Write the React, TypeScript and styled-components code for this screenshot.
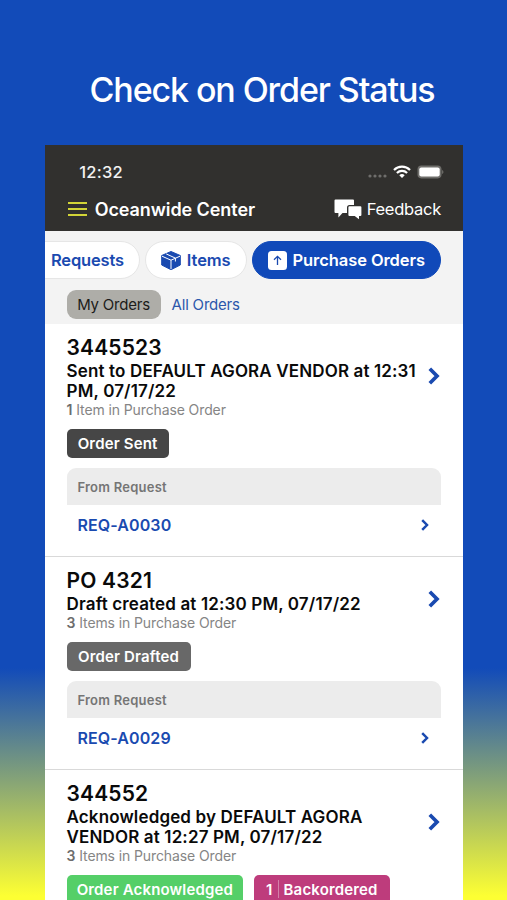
import React from "react";
import styled, { createGlobalStyle } from "styled-components";

const Global = createGlobalStyle`
  * { box-sizing: border-box; }
  html, body { margin: 0; padding: 0; }
  body { font-family: Inter, "Liberation Sans", sans-serif; overflow: hidden; }
`;

const Page = styled.div`
  width: 507px;
  height: 900px;
  overflow: hidden;
  background: linear-gradient(180deg, #124bb9 0, #124bb9 668px, #fdff33 896px);
`;

const Headline = styled.h1`
  margin: 0;
  padding: 70px 0 0 17px;
  height: 145px;
  text-align: center;
  color: #fff;
  font-size: 34px;
  line-height: 40px;
  font-weight: 550;
  letter-spacing: -1.1px;
  white-space: nowrap;
`;

const Phone = styled.main`
  width: 417.4px;
  height: 755px;
  margin-left: 45.2px;
  overflow: hidden;
  background: #fff;
`;

const Top = styled.header`
  height: 86px;
  padding-top: 16px;
  background: #31302e;
  color: #fff;
`;

const StatusBar = styled.div`
  display: flex;
  align-items: center;
  height: 22px;
  padding: 0 19px 0 34px;
`;

const Clock = styled.span`
  flex: 1;
  font-size: 16.5px;
  font-weight: 500;
  letter-spacing: 0.25px;
  color: #f2f2f2;
`;

const Signals = styled.div`
  display: flex;
  align-items: center;
  gap: 6px;
`;

const NavBar = styled.div`
  display: flex;
  align-items: center;
  height: 24px;
  margin-top: 14px;
  padding: 0 21.5px 0 23px;
`;

const SiteName = styled.span`
  flex: 1;
  margin-left: 7.5px;
  font-size: 18px;
  font-weight: 600;
  letter-spacing: -0.08px;
  white-space: nowrap;
`;

const Feedback = styled.span`
  margin-left: 4.5px;
  font-size: 16.5px;
  letter-spacing: -0.25px;
`;

const Filters = styled.section`
  height: 93px;
  padding-top: 10px;
  background: #f3f3f3;
`;

const Tabs = styled.nav`
  display: flex;
  gap: 5px;
  height: 39px;
  justify-content: flex-end;
  padding-right: 21.6px;
`;

const Tab = styled.div<{ $w: number; $active?: boolean; $clipped?: boolean }>`
  flex: none;
  display: flex;
  align-items: center;
  justify-content: ${(p) => (p.$clipped ? "flex-end" : "center")};
  padding-right: ${(p) => (p.$clipped ? "15px" : "0")};
  gap: 5.5px;
  width: ${(p) => p.$w}px;
  height: 38px;
  border-radius: 19px;
  border: 1px solid ${(p) => (p.$active ? "#1049b9" : "#e6e6e6")};
  background: ${(p) => (p.$active ? "#1049b9" : "#fff")};
  color: ${(p) => (p.$active ? "#fff" : "#1a4ab0")};
  font-size: 16.5px;
  font-weight: 600;
  letter-spacing: ${(p) => (p.$clipped ? "-0.15px" : "-0.08px")};
  white-space: nowrap;
`;

const SubTabs = styled.div`
  display: flex;
  height: 29px;
  margin: 9.5px 0 0 21.4px;
  gap: 11px;
`;

const SubTab = styled.span<{ $active?: boolean }>`
  display: flex;
  align-items: center;
  justify-content: center;
  width: ${(p) => (p.$active ? "94px" : "auto")};
  border-radius: 9px;
  background: ${(p) => (p.$active ? "#aeada8" : "transparent")};
  color: ${(p) => (p.$active ? "#1c1c1a" : "#2c57ab")};
  font-size: 15px;
  letter-spacing: -0.2px;
  white-space: nowrap;
`;

const Card = styled.article<{ $h: number }>`
  height: ${(p) => p.$h}px;
  padding: 13px 21.4px 0;
  border-bottom: 1.5px solid #d9d9d9;
`;

const Summary = styled.div`
  display: flex;
  align-items: center;
`;

const Details = styled.div`
  flex: 1;
  white-space: nowrap;
`;

const Title = styled.h2`
  margin: 0 0 2px;
  font-size: 21px;
  line-height: 22px;
  font-weight: 600;
  letter-spacing: 0.15px;
  color: #0a0a0a;
`;

const Subtitle = styled.p`
  margin: 0;
  font-size: 17px;
  line-height: 20.2px;
  font-weight: 600;
  letter-spacing: 0.14px;
  color: #0a0a0a;
`;

const Count = styled.p`
  margin: 0;
  font-size: 14px;
  line-height: 18px;
  letter-spacing: -0.11px;
  color: #858585;
  b { font-weight: 600; color: #6d6d6d; }
`;

const Arrow = styled.span<{ $top: number }>`
  align-self: flex-start;
  margin: ${(p) => p.$top}px 0.8px 0 0;
  height: 18px;
  line-height: 0;
`;

const Badges = styled.div`
  display: flex;
  gap: 11px;
  height: 29px;
  margin-top: 9.4px;
`;

const Badge = styled.span<{ $bg: string; $w: number }>`
  display: flex;
  align-items: center;
  justify-content: center;
  width: ${(p) => p.$w}px;
  border-radius: 5px;
  background: ${(p) => p.$bg};
  color: #fff;
  font-size: 15px;
  font-weight: 600;
  letter-spacing: 0.16px;
  white-space: nowrap;
`;

const BadgeRule = styled.i`
  width: 1px;
  height: 18px;
  margin: 0 5px;
  background: rgba(255, 255, 255, 0.35);
`;

const SourceHead = styled.div`
  height: 36.5px;
  margin-top: 10.6px;
  padding-left: 10.8px;
  border-radius: 9px 9px 0 0;
  background: #ececec;
  color: #757575;
  font-size: 13px;
  line-height: 38px;
  font-weight: 600;
  letter-spacing: 0.24px;
`;

const SourceRow = styled.div`
  display: flex;
  align-items: center;
  justify-content: space-between;
  height: 40px;
  padding: 0 12px 0 10.8px;
  color: #1a4ab0;
  font-size: 16px;
  font-weight: 600;
  letter-spacing: 0.12px;
`;

const Menu = () => (
  <svg width="19" height="16" viewBox="0 0 19 16" stroke="#d2d437" strokeWidth="2">
    <path d="M0 2h19M0 8h19M0 14h19" />
  </svg>
);

const Cellular = () => (
  <svg width="19" height="14" viewBox="0 0 19 14" fill="#6f6e6c">
    <circle cx="2" cy="11" r="1.6" />
    <circle cx="7" cy="11" r="1.6" />
    <circle cx="12" cy="11" r="1.6" />
    <circle cx="17" cy="11" r="1.6" />
  </svg>
);

const Wifi = () => (
  <svg width="18" height="14" viewBox="0 0 18 14" fill="none" stroke="#fff" strokeWidth="2.2">
    <path d="M1 5a11.4 11.4 0 0 1 16 0M3.9 8a7.3 7.3 0 0 1 10.2 0" />
    <path d="M9 13 6.3 10.2a4 4 0 0 1 5.4 0z" fill="#fff" stroke="none" />
  </svg>
);

const Battery = () => (
  <svg width="27" height="14" viewBox="0 0 27 14">
    <rect x=".5" y=".6" width="24" height="12.8" rx="3.8" fill="#6f6e6b" />
    <rect x="2.3" y="2.5" width="20.4" height="9" rx="2" fill="#fff" />
    <path d="M25.300 5v4c1.400-.7 1.400-3.300 0-4z" fill="#85837f" />
  </svg>
);

const Chats = () => (
  <svg width="28" height="21" viewBox="0 0 28 21" fill="#fff">
    <path d="M1.500.5h17.500a1 1 0 0 1 1 1v4.500h-4.500a2.500 2.500 0 0 0-2.500 2.500v5.500H8.500L4.400 18.500V14H1.500a1 1 0 0 1-1-1V1.500a1 1 0 0 1 1-1z" />
    <path d="M15.400 7.200h11a1 1 0 0 1 1 1v7.900a1 1 0 0 1-1 1h-1.400v3.200l-4.300-3.200h-5.300a1 1 0 0 1-1-1V8.200a1 1 0 0 1 1-1z" />
  </svg>
);

const Box = () => (
  <svg width="20" height="19" viewBox="0 0 20 19">
    <path d="M10 .5 19.300 4.500V14L10 18.700.7 14V4.500z" fill="#1a4ab0" stroke="#1a4ab0" strokeLinejoin="round" />
    <path d="M1 5.200 10 9.200l9-4M10 9.200v9M5.200 2.900l9.200 4.200v3.400" fill="none" stroke="#fff" strokeWidth="1" />
  </svg>
);

const UpSquare = () => (
  <svg width="19" height="19" viewBox="0 0 19 19">
    <rect width="19" height="19" rx="3.500" fill="#fff" />
    <path d="M9.500 14V5.700M6 8.700l3.500-3.300L13 8.700" fill="none" stroke="#1a4ab0" strokeWidth="1.300" />
  </svg>
);

const Chevron = ({ big = false }: { big?: boolean }) => (
  <svg width={big ? 12 : 8} height={big ? 18 : 12} viewBox="0 0 12 18" fill="none" stroke="#1a4ab0" strokeWidth="3.700">
    <path d="M1.800 1.800 9 9l-7.200 7.200" />
  </svg>
);

type Order = {
  id: string;
  lines: string[];
  count: number;
  height: number;
  arrow: number;
  badges: { label: string; bg: string; w: number; n?: number }[];
  source?: string;
};

const orders: Order[] = [
  {
    id: "3445523",
    lines: ["Sent to DEFAULT AGORA VENDOR at 12:31", "PM, 07/17/22"],
    count: 1, height: 233, arrow: 30,
    badges: [{ label: "Order Sent", bg: "#464646", w: 102 }],
    source: "REQ-A0030",
  },
  {
    id: "PO 4321",
    lines: ["Draft created at 12:30 PM, 07/17/22"],
    count: 3, height: 212.8, arrow: 20,
    badges: [{ label: "Order Drafted", bg: "#686868", w: 124 }],
    source: "REQ-A0029",
  },
  {
    id: "344552",
    lines: ["Acknowledged by DEFAULT AGORA", "VENDOR at 12:27 PM, 07/17/22"],
    count: 3, height: 233, arrow: 30,
    badges: [
      { label: "Order Acknowledged", bg: "#55cf68", w: 176.500 },
      { label: "Backordered", bg: "#be3c7c", w: 135.500, n: 1 },
    ],
  },
];

export default function App() {
  return (
    <Page>
      <Global />
      <Headline>Check on Order Status</Headline>
      <Phone>
        <Top>
          <StatusBar>
            <Clock>12:32</Clock>
            <Signals><Cellular /><Wifi /><Battery /></Signals>
          </StatusBar>
          <NavBar>
            <Menu />
            <SiteName>Oceanwide Center</SiteName>
            <Chats />
            <Feedback>Feedback</Feedback>
          </NavBar>
        </Top>
        <Filters>
          <Tabs>
            <Tab $w={128} $clipped>Requests</Tab>
            <Tab $w={102}><Box />Items</Tab>
            <Tab $w={189} $active><UpSquare />Purchase Orders</Tab>
          </Tabs>
          <SubTabs>
            <SubTab $active>My Orders</SubTab>
            <SubTab>All Orders</SubTab>
          </SubTabs>
        </Filters>
        {orders.map((o) => (
          <Card key={o.id} $h={o.height}>
            <Summary>
              <Details>
                <Title>{o.id}</Title>
                {o.lines.map((l) => <Subtitle key={l}>{l}</Subtitle>)}
                <Count><b>{o.count}</b> {o.count === 1 ? "Item" : "Items"} in Purchase Order</Count>
              </Details>
              <Arrow $top={o.arrow}><Chevron big /></Arrow>
            </Summary>
            <Badges>
              {o.badges.map((b) => (
                <Badge key={b.label} $bg={b.bg} $w={b.w}>
                  {b.n && <>{b.n}<BadgeRule /></>}{b.label}
                </Badge>
              ))}
            </Badges>
            {o.source && (
              <>
                <SourceHead>From Request</SourceHead>
                <SourceRow>{o.source}<Chevron /></SourceRow>
              </>
            )}
          </Card>
        ))}
      </Phone>
    </Page>
  );
}
